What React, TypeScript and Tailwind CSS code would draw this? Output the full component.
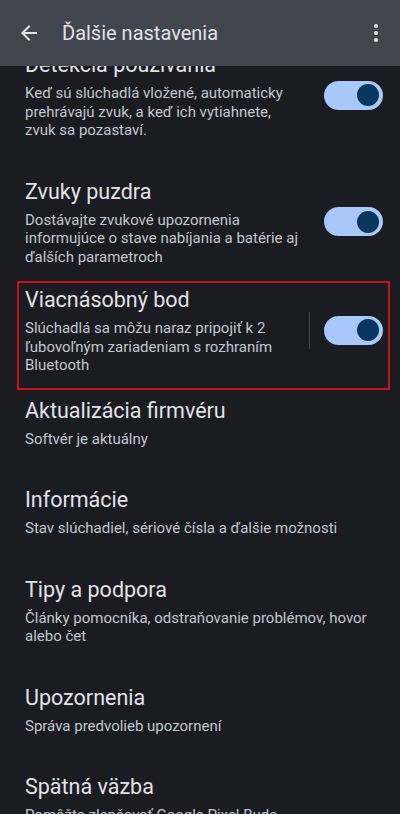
import React from 'react';

type Item = {
  title: string;
  desc: string[];
  toggle?: boolean;
};

const items: Item[] = [
  {
    title: 'Detekcia používania',
    desc: ['Keď sú slúchadlá vložené, automaticky', 'prehrávajú zvuk, a keď ich vytiahnete,', 'zvuk sa pozastaví.'],
    toggle: true,
  },
  {
    title: 'Zvuky puzdra',
    desc: ['Dostávajte zvukové upozornenia', 'informujúce o stave nabíjania a batérie aj', 'ďalších parametroch'],
    toggle: true,
  },
];

const rest: Item[] = [
  { title: 'Informácie', desc: ['Stav slúchadiel, sériové čísla a ďalšie možnosti'] },
  { title: 'Tipy a podpora', desc: ['Články pomocníka, odstraňovanie problémov, hovor', 'alebo čet'] },
  { title: 'Upozornenia', desc: ['Správa predvolieb upozornení'] },
  { title: 'Spätná väzba', desc: ['Pomôžte zlepšovať Google Pixel Buds'] },
];

const Toggle: React.FC = () => (
  <div className="w-[59px] h-[29px] rounded-full bg-[#a8c8fa] flex items-center justify-end pr-[4px] shrink-0">
    <div className="w-[22px] h-[22px] rounded-full bg-[#0b365f]" />
  </div>
);

const Texts: React.FC<{ item: Item }> = ({ item }) => (
  <div className="flex-1 min-w-0">
    <div className="text-[21.5px] leading-[28px] text-[#e3e2e8]">{item.title}</div>
    <div className="mt-[5px] text-[15px] leading-[18.5px] text-[#c2c6cf]">
      {item.desc.map((line, i) => (
        <div key={i} className="whitespace-nowrap">{line}</div>
      ))}
    </div>
  </div>
);

export default function App() {
  return (
    <div
      className="relative w-[400px] h-[814px] overflow-hidden bg-[#1a1c22]"
      style={{ fontFamily: 'Roboto, "Noto Sans", sans-serif' }}
    >
      <div className="absolute top-0 left-0 right-0 z-10 h-[66px] bg-[#41464e] flex items-center">
        <svg width="24" height="24" viewBox="0 0 24 24" className="ml-[17px] text-[#e3e2e8]">
          <path d="M20 11H7.83l5.59-5.59L12 4l-8 8 8 8 1.41-1.41L7.83 13H20v-2z" fill="currentColor" />
        </svg>
        <div className="ml-[21px] text-[20px] text-[#e3e2e8]">Ďalšie nastavenia</div>
        <svg width="24" height="24" viewBox="0 0 24 24" className="ml-auto mr-[12px] text-[#e3e2e8]">
          <circle cx="12" cy="5" r="2.1" fill="currentColor" />
          <circle cx="12" cy="12" r="2.1" fill="currentColor" />
          <circle cx="12" cy="19" r="2.1" fill="currentColor" />
        </svg>
      </div>

      <div className="pt-[32px]">
        {items.map((item, i) => (
          <div
            key={item.title}
            className={`flex items-center pl-[25px] pr-[17px] pt-[19px] ${i === 1 ? 'pb-[15px]' : 'pb-[19px]'}`}
          >
            <Texts item={item} />
            <Toggle />
          </div>
        ))}

        {/* highlighted row */}
        <div className="mx-[17px] w-[373px] border-2 border-[#c8121c] flex items-center pl-[6px] pr-[5px] pt-[3px] pb-[13px]">
          <Texts item={{ title: 'Viacnásobný bod', desc: ['Slúchadlá sa môžu naraz pripojiť k 2', 'ľubovoľným zariadeniam s rozhraním', 'Bluetooth'] }} />
          <div className="w-px h-[37px] bg-[#3f434a] mr-[14px]" />
          <Toggle />
        </div>

        <div className="flex items-center pl-[25px] pr-[17px] pt-[7px] pb-[19px]">
          <Texts item={{ title: 'Aktualizácia firmvéru', desc: ['Softvér je aktuálny'] }} />
        </div>

        {rest.map((item) => (
          <div key={item.title} className="flex items-center pl-[25px] pr-[17px] py-[19px]">
            <Texts item={item} />
          </div>
        ))}
      </div>
    </div>
  );
}
